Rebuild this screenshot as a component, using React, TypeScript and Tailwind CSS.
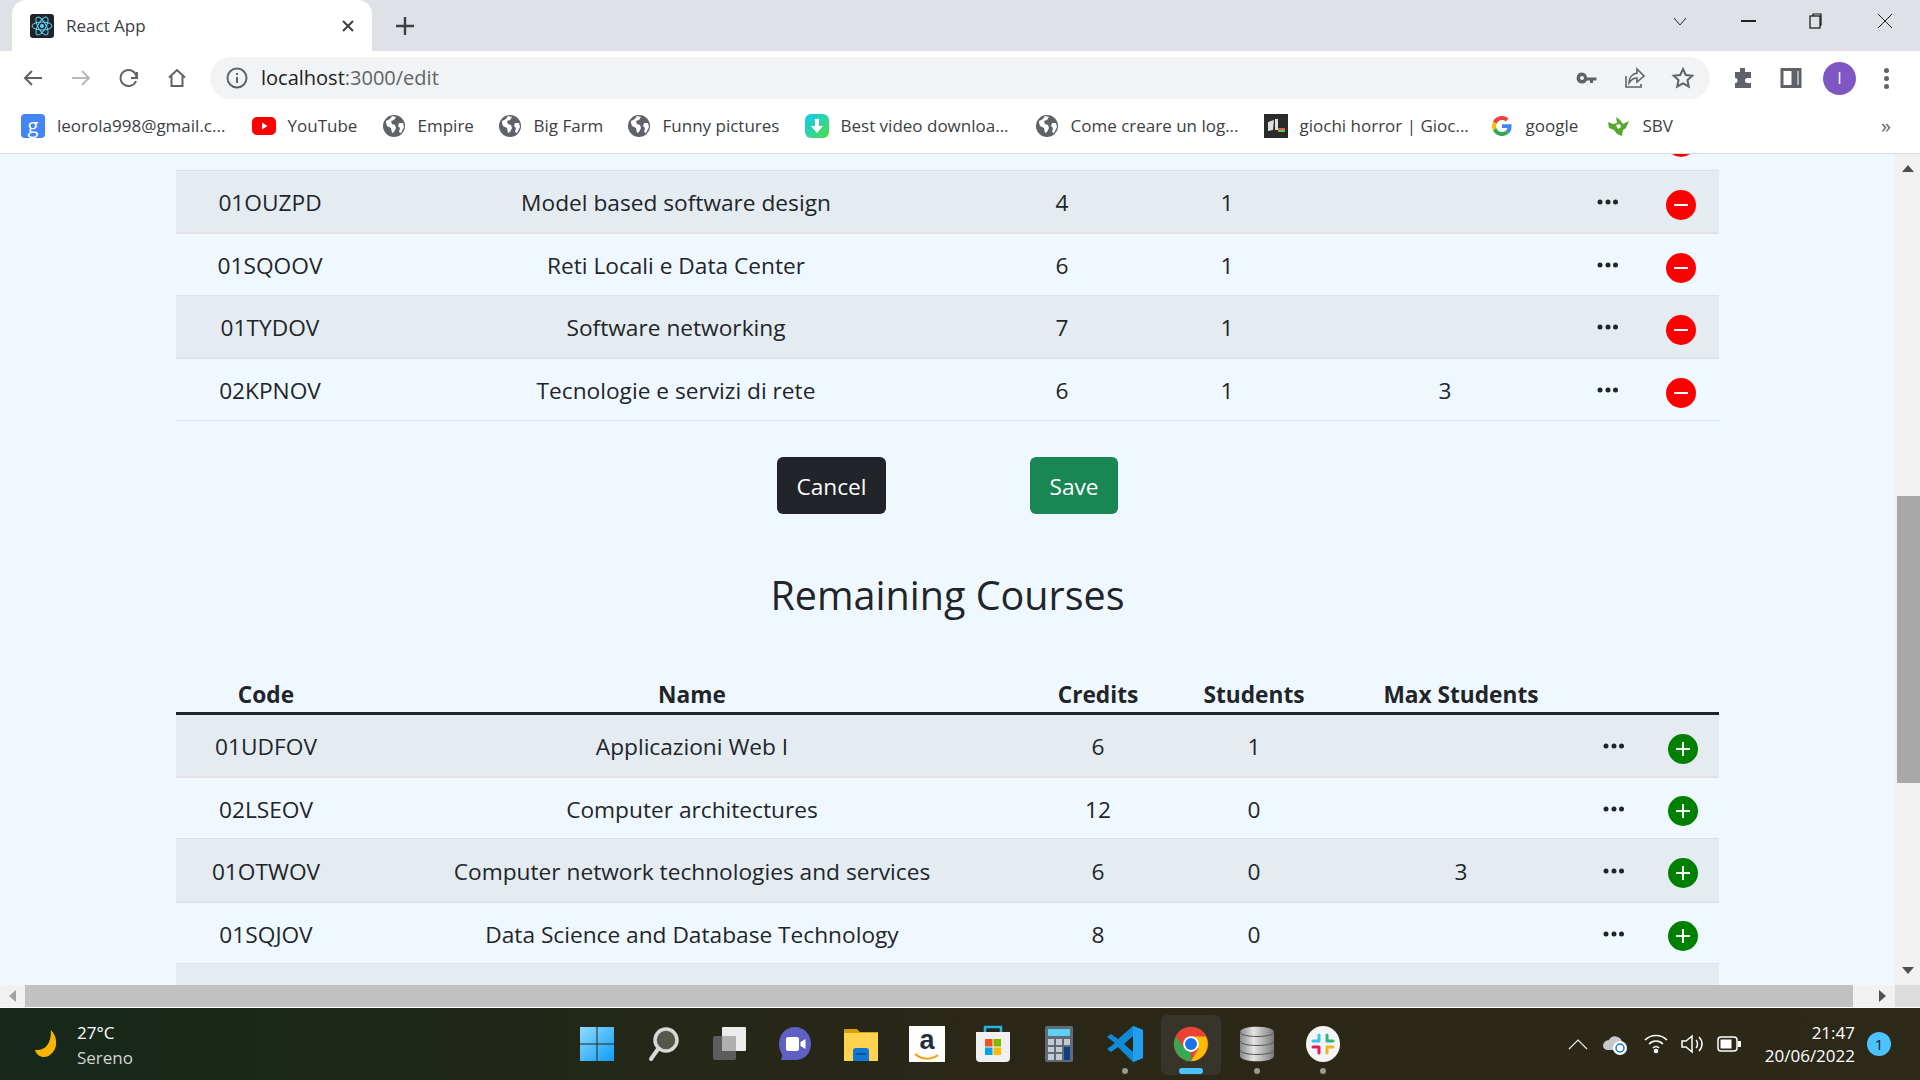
import React from 'react';

type Course = { code: string; name: string; credits: number; students: number; max?: number };

const FONT = "font-['Open_Sans','Noto_Sans',sans-serif]";

const selected: Course[] = [
  { code: '01OUZPD', name: 'Model based software design', credits: 4, students: 1 },
  { code: '01SQOOV', name: 'Reti Locali e Data Center', credits: 6, students: 1 },
  { code: '01TYDOV', name: 'Software networking', credits: 7, students: 1 },
  { code: '02KPNOV', name: 'Tecnologie e servizi di rete', credits: 6, students: 1, max: 3 },
];

const remaining: Course[] = [
  { code: '01UDFOV', name: 'Applicazioni Web I', credits: 6, students: 1 },
  { code: '02LSEOV', name: 'Computer architectures', credits: 12, students: 0 },
  { code: '01OTWOV', name: 'Computer network technologies and services', credits: 6, students: 0, max: 3 },
  { code: '01SQJOV', name: 'Data Science and Database Technology', credits: 8, students: 0 },
];

// --- browser icons ---
const Globe = () => (
  <svg width="24" height="24" viewBox="0 0 24 24">
    <circle cx="12" cy="12" r="11" fill="#5f6368" />
    <path d="M4 7c3-1 5-3 6-5l4 1-2 3-3 1 1 3 3 1 1 3-2 4-2 1-1-5-4-2-1-3zM17 9l4 0 1 4-3 6-2-1 1-4-2-2z" fill="#fff" />
  </svg>
);

const ReactLogo = () => (
  <svg width="24" height="24" viewBox="0 0 24 24">
    <rect width="24" height="24" rx="3" fill="#20232a" />
    <g fill="none" stroke="#61dafb" strokeWidth="1">
      <ellipse cx="12" cy="12" rx="10" ry="4" />
      <ellipse cx="12" cy="12" rx="10" ry="4" transform="rotate(60 12 12)" />
      <ellipse cx="12" cy="12" rx="10" ry="4" transform="rotate(120 12 12)" />
    </g>
    <circle cx="12" cy="12" r="2" fill="#61dafb" />
  </svg>
);

const GoogleG = () => (
  <svg width="20" height="20" viewBox="0 0 48 48">
    <path fill="#EA4335" d="M24 9.5c3.5 0 6.7 1.3 9.1 3.5l6.8-6.8C35.800 2.400 30.200 0 24 0 14.600 0 6.500 5.400 2.600 13.200l7.900 6.200C12.400 13.700 17.700 9.500 24 9.500z" />
    <path fill="#4285F4" d="M47 24.500c0-1.600-.1-3.100-.4-4.500H24v9h12.900c-.6 3-2.200 5.500-4.700 7.200l7.700 6c4.500-4.200 7.100-10.300 7.100-17.700z" />
    <path fill="#FBBC05" d="M10.500 28.600c-.5-1.400-.8-3-.8-4.600s.3-3.200.8-4.600l-7.900-6.200C.9 16.500 0 20.100 0 24s.9 7.500 2.600 10.800l7.900-6.200z" />
    <path fill="#34A853" d="M24 48c6.500 0 11.900-2.100 15.900-5.800l-7.700-6c-2.200 1.400-4.900 2.300-8.200 2.300-6.300 0-11.600-4.200-13.500-9.900l-7.900 6.200C6.500 42.600 14.600 48 24 48z" />
  </svg>
);

const bookmarks: { icon: React.ReactNode; label: string; w: string }[] = [
  {
    icon: <span className="flex h-6 w-6 items-center justify-center rounded-sm bg-[#4285f4] text-[20px] leading-none text-white">g</span>,
    label: 'leorola998@gmail.c...',
    w: 'w-[169.500px]',
  },
  {
    icon: (
      <svg width="24" height="24" viewBox="0 0 24 24">
        <rect y="3" width="24" height="18" rx="5" fill="#f00" />
        <path d="M10 8.500v7l5.500-3.500z" fill="#fff" />
      </svg>
    ),
    label: 'YouTube',
    w: 'w-[69px]',
  },
  { icon: <Globe />, label: 'Empire', w: 'w-[55px]' },
  { icon: <Globe />, label: 'Big Farm', w: 'w-[68px]' },
  { icon: <Globe />, label: 'Funny pictures', w: 'w-[117px]' },
  {
    icon: (
      <span className="flex h-6 w-6 items-center justify-center rounded-md bg-gradient-to-br from-[#12c8f0] to-[#4fdc20]">
        <svg width="14" height="16" viewBox="0 0 14 16">
          <path d="M5 1h4v7h4l-6 7-6-7h4z" fill="#fff" />
        </svg>
      </span>
    ),
    label: 'Best video downloa...',
    w: 'w-[169px]',
  },
  { icon: <Globe />, label: 'Come creare un log...', w: 'w-[168px]' },
  {
    icon: (
      <svg width="24" height="24" viewBox="0 0 24 24">
        <rect width="24" height="24" fill="#2b2b2b" />
        <path d="M4 8l6-2-1 10-5 1zM11 5h3v11h-3z" fill="#ddd" />
        <rect x="14" y="14" width="7" height="2" fill="#e55" />
        <rect x="14" y="16" width="7" height="2" fill="#5c5" />
      </svg>
    ),
    label: 'giochi horror | Gioc...',
    w: 'w-[165px]',
  },
  { icon: <GoogleG />, label: 'google', w: 'w-[56px]' },
  {
    icon: (
      <svg width="24" height="24" viewBox="0 0 24 24">
        <path d="M1 8l5 2 4-1-1-6 4 3 3 4 6-3-3 7-3 2-1 6-5-2-3-4-5-2z" fill="#58a82e" />
        <path d="M9 11l4-1 1 3-3 2z" fill="#fff" />
      </svg>
    ),
    label: 'SBV',
    w: 'w-[32px]',
  },
];

const IconStroke: React.FC<{ size?: number; color?: string; width?: number; d: string }> = ({ size = 24, color = '#5f6368', width = 2, d }) => (
  <svg width={size} height={size} viewBox="0 0 24 24" fill="none" stroke={color} strokeWidth={width}>
    <path d={d} />
  </svg>
);

const TabStrip = () => (
  <div className="flex h-[51px] items-end bg-[#dee1e6] pl-[12px]">
    <div className="flex h-[51px] w-[360px] items-center rounded-t-[14px] bg-white pl-[18px] pr-[17px]">
      <ReactLogo />
      <span className="ml-[12px] flex-1 text-[17px] text-[#3c4043]">React App</span>
      <svg width="14" height="14" viewBox="0 0 14 14" stroke="#3c4043" strokeWidth="2">
        <path d="M2 2l10 10M12 2L2 12" />
      </svg>
    </div>
    <div className="ml-[23px] flex h-[51px] w-[20px] items-center justify-center pt-[1px]">
      <svg width="20" height="20" viewBox="0 0 20 20" stroke="#3c4043" strokeWidth="2.400">
        <path d="M10 1v18M1 10h18" />
      </svg>
    </div>
    <div className="ml-auto flex h-[42px] items-center self-start">
      <div className="flex w-[69px] justify-center">
        <svg width="14" height="9" viewBox="0 0 14 9" fill="none" stroke="#222" strokeWidth="1"><path d="M1 1l6 7 6-7" /></svg>
      </div>
      <div className="flex w-[68px] justify-center">
        <div className="h-[1.5px] w-[15px] bg-[#222]" />
      </div>
      <div className="flex w-[69px] justify-center">
        <svg width="16" height="16" viewBox="0 0 16 16" fill="none" stroke="#111" strokeWidth="1.200">
          <rect x="1" y="3" width="10" height="12" />
          <path d="M4 3V1h8v11h-1" />
        </svg>
      </div>
      <div className="flex w-[69px] justify-center pr-[2px]">
        <svg width="16" height="16" viewBox="0 0 16 16" stroke="#222" strokeWidth="1"><path d="M1 1l14 14M15 1L1 15" /></svg>
      </div>
    </div>
  </div>
);

const Toolbar = () => (
  <div className="flex h-[49px] items-center bg-white pl-[21px] pt-[5px]">
    <IconStroke d="M21 12H4M11 5l-7 7 7 7" />
    <div className="ml-[24px]"><IconStroke color="#b6b8bb" d="M3 12h17M13 5l7 7-7 7" /></div>
    <div className="ml-[24px]"><IconStroke d="M20 6v6h-6M19.500 11A8 8 0 1 0 19 15" /></div>
    <div className="ml-[24px]"><IconStroke d="M4 11.500L12 4l8 7.500M6.500 10v10h11V10" /></div>
    <div className="ml-[21px] flex h-[42px] w-[1500px] items-center rounded-full bg-[#f1f3f4] pl-[15px] pr-[15px]">
      <svg width="24" height="24" viewBox="0 0 24 24" fill="none" stroke="#5f6368" strokeWidth="2">
        <circle cx="12" cy="12" r="9.500" />
        <path d="M12 11v6M12 7v2" />
      </svg>
      <span className="ml-[12px] flex-1 text-[20px] text-[#202124]">
        localhost<span className="text-[#5f6368]">:3000/edit</span>
      </span>
      <svg width="24" height="24" viewBox="0 0 24 24" fill="#5f6368">
        <path d="M7 6.500a5.500 5.500 0 1 0 5 8h3v2.500h3v-2.500h3.500v-3H12a5.500 5.500 0 0 0-5-5zM7 10a2 2 0 1 1 0 4 2 2 0 0 1 0-4z" />
      </svg>
      <div className="ml-[24px]">
        <svg width="24" height="24" viewBox="0 0 24 24" fill="none" stroke="#5f6368" strokeWidth="1.600">
          <path d="M3 10v11h15v-3M14 3l7 7-7 6v-4c-4 0-6 2-8 5 0-5 3-9 8-10z" />
        </svg>
      </div>
      <div className="ml-[24px]">
        <IconStroke d="M12 3l2.800 6 6.500.700-4.800 4.400 1.300 6.400L12 17.300 6.200 20.500l1.300-6.400-4.800-4.400 6.500-.700z" />
      </div>
    </div>
    <div className="ml-[21px]">
      <svg width="24" height="24" viewBox="0 0 24 24" fill="#5f6368">
        <path d="M9 2h5v4h6v6h-3.500a2.500 2.500 0 0 0 0 5H20v5H4v-5a2.500 2.500 0 0 0 0-5V6h5z" />
      </svg>
    </div>
    <div className="ml-[24px]">
      <svg width="24" height="24" viewBox="0 0 24 24" fill="none" stroke="#5f6368" strokeWidth="3">
        <rect x="3" y="3.500" width="18" height="17" />
        <path d="M15.500 3v18" strokeWidth="6" />
      </svg>
    </div>
    <div className="ml-[20px] flex h-[33px] w-[33px] items-center justify-center rounded-full bg-[#7e57c2] text-[16px] leading-none text-white">I</div>
    <div className="ml-[28px] flex w-[4px] flex-col gap-[3px]">
      <div className="h-[5px] w-[5px] rounded-full bg-[#5f6368]" />
      <div className="h-[5px] w-[5px] rounded-full bg-[#5f6368]" />
      <div className="h-[5px] w-[5px] rounded-full bg-[#5f6368]" />
    </div>
  </div>
);

const BookmarksBar = () => (
  <div className="flex h-[54px] items-center border-b-[1px] border-[#dadce0] bg-white pb-[2px] pl-[21px]">
    {bookmarks.map((b) => (
      <div key={b.label} className="mr-[25px] flex items-center gap-[12px]">
        <div className="flex w-[24px] justify-center">{b.icon}</div>
        <span className={`${b.w} whitespace-nowrap text-[17px] leading-none text-[#3c4043]`}>{b.label}</span>
      </div>
    ))}
    <span className="ml-auto mr-[29px] text-[20px] leading-none text-[#5f6368]">»</span>
  </div>
);

// --- table ---
const Dots = () => (
  <svg width="22" height="6" viewBox="0 0 22 6" fill="#212529" className="mx-auto mt-[2px]">
    <circle cx="3" cy="3" r="2.500" />
    <circle cx="11" cy="3" r="2.500" />
    <circle cx="18.500" cy="3" r="2.500" />
  </svg>
);

const RoundAction: React.FC<{ kind: 'add' | 'remove' }> = ({ kind }) => (
  <svg width="30" height="30" viewBox="0 0 30 30" className="mx-auto mt-[7px]">
    <circle cx="15" cy="15" r="15" fill={kind === 'add' ? '#008000' : '#ff0000'} />
    <path d={kind === 'add' ? 'M8 15h14M15 8v14' : 'M8 15h14'} stroke="#fff" strokeWidth="2" />
  </svg>
);

const CourseRow: React.FC<{ c: Course; striped: boolean; kind: 'add' | 'remove' }> = ({ c, striped, kind }) => (
  <tr className={`border-[#dee2e6] text-center ${striped ? 'h-[63px] border-b-2 bg-[#e4ecf2]' : 'h-[62px] border-b'}`}>
    <td className="pt-[4px]">{c.code}</td>
    <td className="pt-[4px]">{c.name}</td>
    <td className="pt-[4px]">{c.credits}</td>
    <td className="pt-[4px]">{c.students}</td>
    <td className="pt-[4px]">{c.max ?? ''}</td>
    <td><Dots /></td>
    <td className={kind === 'remove' ? 'pr-[1px]' : ''}><RoundAction kind={kind} /></td>
  </tr>
);

const Scrollbar = () => (
  <div className="flex w-[25px] flex-col items-center bg-[#f1f1f1]">
    <div className="flex h-[29px] items-center">
      <svg width="12" height="7" viewBox="0 0 12 7" fill="#505050"><path d="M6 0l6 7H0z" /></svg>
    </div>
    <div className="mt-[313px] h-[287px] w-[23px] self-end bg-[#a8a8a8]" />
    <div className="mt-auto flex h-[29px] items-center">
      <svg width="12" height="7" viewBox="0 0 12 7" fill="#505050"><path d="M6 7l6-7H0z" /></svg>
    </div>
  </div>
);

const Page = () => (
  <div className="flex h-[831px] bg-[#f0f8ff]">
    <div className={`flex-1 overflow-hidden text-[22.700px] text-[#212529] ${FONT}`}>
      <div className="-mt-[46px] px-[176px]">
        <table className="w-[1543px] table-fixed border-collapse">
          <colgroup>
            <col className="w-[188px]" />
            <col className="w-[624px]" />
            <col className="w-[148px]" />
            <col className="w-[182px]" />
            <col className="w-[254px]" />
            <col className="w-[72px]" />
            <col className="w-[75px]" />
          </colgroup>
          <tbody>
            <tr className="h-[62px] border-b border-[#dee2e6]">
              <td colSpan={6} />
              <td className="pr-[1px]"><RoundAction kind="remove" /></td>
            </tr>
            {selected.map((c, i) => (
              <CourseRow key={c.code} c={c} striped={i % 2 === 0} kind="remove" />
            ))}
          </tbody>
        </table>

        <div className="mt-[36px] flex">
          <button className="ml-[601px] h-[57px] w-[109px] rounded-[6px] bg-[#212529] pt-[5px] text-white">Cancel</button>
          <button className="ml-[144px] h-[57px] w-[88px] rounded-[6px] bg-[#198754] pt-[5px] text-white">Save</button>
        </div>

        <h2 className="mt-[52px] w-[1543px] text-center text-[39.500px] leading-[58px] font-normal">Remaining Courses</h2>

        <table className="mt-[40px] w-[1543px] table-fixed border-collapse">
          <colgroup>
            <col className="w-[180px]" />
            <col className="w-[672px]" />
            <col className="w-[140px]" />
            <col className="w-[172px]" />
            <col className="w-[242px]" />
            <col className="w-[64px]" />
            <col className="w-[73px]" />
          </colgroup>
          <thead>
            <tr className="h-[50px] border-b-[3px] border-[#212529] text-center">
              <th className="pt-[14px]">Code</th>
              <th className="pt-[14px]">Name</th>
              <th className="pt-[14px]">Credits</th>
              <th className="pt-[14px]">Students</th>
              <th className="pt-[14px]">Max Students</th>
              <th />
              <th />
            </tr>
          </thead>
          <tbody>
            {remaining.map((c, i) => (
              <CourseRow key={c.code} c={c} striped={i % 2 === 0} kind="add" />
            ))}
            <tr className="h-[63px] bg-[#e4ecf2]">
              <td colSpan={7} />
            </tr>
          </tbody>
        </table>
      </div>
    </div>
    <Scrollbar />
  </div>
);

const HScrollbar = () => (
  <div className="flex h-[23px] border-b-[1px] border-white bg-[#f1f1f1]">
    <div className="flex w-[25px] items-center justify-center">
      <svg width="7" height="12" viewBox="0 0 7 12" fill="#a0a0a0"><path d="M0 6l7-6v12z" /></svg>
    </div>
    <div className="h-full w-[1828px] bg-[#c1c1c1]" />
    <div className="flex w-[42px] items-center justify-end pr-[9px]">
      <svg width="7" height="12" viewBox="0 0 7 12" fill="#505050"><path d="M7 6L0 0v12z" /></svg>
    </div>
    <div className="w-[25px] bg-[#dcdcdc]" />
  </div>
);

// --- taskbar ---
const taskIcons: { key: string; node: React.ReactNode; mark?: 'dot' | 'bar' }[] = [
  {
    key: 'start',
    node: (
      <svg width="36" height="36" viewBox="0 0 36 36">
        <defs>
          <linearGradient id="win" x1="0" y1="0" x2="1" y2="1">
            <stop offset="0" stopColor="#8fdcff" />
            <stop offset="1" stopColor="#0f9bf5" />
          </linearGradient>
        </defs>
        <path d="M1 1h16.500v16.500H1zM18.500 1H35v16.500H18.500zM1 18.500h16.500V35H1zM18.500 18.500H35V35H18.500z" fill="url(#win)" />
      </svg>
    ),
  },
  {
    key: 'search',
    node: (
      <svg width="36" height="36" viewBox="0 0 36 36" fill="none" stroke="#d8d8d8">
        <circle cx="21" cy="14" r="11" strokeWidth="3.500" fill="#56564a" />
        <path d="M13 23l-7 10" strokeWidth="4" strokeLinecap="round" />
      </svg>
    ),
  },
  {
    key: 'desktops',
    node: (
      <svg width="36" height="36" viewBox="0 0 36 36">
        <rect x="2" y="10" width="23" height="24" rx="2" fill="#5d5d5d" />
        <rect x="11" y="1" width="24" height="24" rx="1" fill="#ececec" />
        <rect x="11" y="10" width="14" height="15" fill="#b0b0b0" />
      </svg>
    ),
  },
  {
    key: 'teams',
    node: (
      <svg width="36" height="36" viewBox="0 0 36 36">
        <path d="M18 1c10 0 16 8 16 17s-6 16-16 16H4c1-3 1-5 1-6-2-3-3-6-3-10C2 9 8 1 18 1z" fill="#5f5fc4" />
        <rect x="9" y="11" width="13" height="14" rx="2" fill="#fff" />
        <path d="M23.500 16l5-3v10l-5-3z" fill="#fff" />
      </svg>
    ),
  },
  {
    key: 'files',
    node: (
      <svg width="36" height="36" viewBox="0 0 36 36">
        <path d="M1 3h13l3 3h18v28H1z" fill="#d69f0c" />
        <rect x="1" y="7" width="34" height="28" fill="#ffd24f" />
        <path d="M10 35V25a3 3 0 0 1 3-3h10a3 3 0 0 1 3 3v10z" fill="#0f78d4" />
        <rect x="13" y="27" width="10" height="2" fill="#0a4f96" />
      </svg>
    ),
  },
  {
    key: 'amazon',
    node: (
      <div className="flex h-[36px] w-[36px] flex-col items-center bg-white pt-[1px]">
        <span className="font-['Liberation_Sans',sans-serif] text-[27px] leading-[26px] font-bold text-[#232f3e]">a</span>
        <svg width="26" height="8" viewBox="0 0 26 8" fill="none" stroke="#f90" strokeWidth="2"><path d="M1 1c7 6 16 6 23 1" /></svg>
      </div>
    ),
  },
  {
    key: 'store',
    node: (
      <svg width="36" height="38" viewBox="0 0 36 38">
        <path d="M10 7V2h16v5" fill="none" stroke="#2ab3e6" strokeWidth="2.500" />
        <path d="M1 7h34v26a4 4 0 0 1-4 4H5a4 4 0 0 1-4-4z" fill="#f0f0f0" />
        <rect x="10" y="14" width="7.500" height="7.500" fill="#f25022" />
        <rect x="18.500" y="14" width="7.500" height="7.500" fill="#7fba00" />
        <rect x="10" y="22.500" width="7.500" height="7.500" fill="#00a4ef" />
        <rect x="18.500" y="22.500" width="7.500" height="7.500" fill="#ffb900" />
      </svg>
    ),
  },
  {
    key: 'calc',
    node: (
      <svg width="28" height="36" viewBox="0 0 28 36">
        <rect width="28" height="36" rx="2" fill="#5f6b78" />
        <rect x="3" y="3" width="22" height="7" fill="#5cd0f0" />
        <g fill="#c4cad0">
          <rect x="3" y="13" width="6" height="6" /><rect x="11" y="13" width="6" height="6" /><rect x="19" y="13" width="6" height="6" />
          <rect x="3" y="21" width="6" height="5" /><rect x="11" y="21" width="6" height="5" />
          <rect x="3" y="28" width="6" height="6" /><rect x="11" y="28" width="6" height="6" />
        </g>
        <rect x="19" y="21" width="6" height="13" fill="#0f3f80" />
      </svg>
    ),
  },
  {
    key: 'vscode',
    node: (
      <svg width="36" height="38" viewBox="0 0 36 38">
        <path d="M26 1l10 4v28l-10 4-15-15-7 5-4-3 8-6-8-6 4-3 7 5zM26 11l-9 8 9 8z" fill="#0f8ad6" />
        <path d="M26 1l10 4v28l-10 4z" fill="#1f9fee" />
      </svg>
    ),
    mark: 'dot',
  },
  {
    key: 'chrome',
    node: (
      <svg width="36" height="36" viewBox="0 0 48 48">
        <circle cx="24" cy="24" r="23" fill="#ea4335" />
        <path d="M24 47A23 23 0 0 1 4 13.500L15 30h9z" fill="#34a853" />
        <path d="M24 14h20a23 23 0 0 1-20 33l10-17z" fill="#fbbc05" />
        <circle cx="24" cy="24" r="10.500" fill="#fff" />
        <circle cx="24" cy="24" r="8" fill="#1a73e8" />
      </svg>
    ),
    mark: 'bar',
  },
  {
    key: 'db',
    node: (
      <svg width="36" height="36" viewBox="0 0 36 36">
        <defs>
          <linearGradient id="db" x1="0" y1="0" x2="1" y2="0">
            <stop offset="0" stopColor="#8a8a8a" />
            <stop offset="0.4" stopColor="#e4e4e4" />
            <stop offset="1" stopColor="#7a7a7a" />
          </linearGradient>
        </defs>
        <path d="M1 6c0-7 34-7 34 0v24c0 7-34 7-34 0z" fill="url(#db)" />
        <path d="M1 6c0 6 34 6 34 0M1 15c0 6 34 6 34 0M1 24c0 6 34 6 34 0" fill="none" stroke="#555" strokeWidth="1" />
      </svg>
    ),
    mark: 'dot',
  },
  {
    key: 'slack',
    node: (
      <svg width="36" height="36" viewBox="0 0 36 36">
        <ellipse cx="18" cy="18" rx="17" ry="18" fill="#f5f5f5" />
        <g strokeWidth="3" strokeLinecap="round">
          <path d="M14 9v6M8 15h6" stroke="#36c5f0" />
          <path d="M22 9v6M28 15h-6" stroke="#2eb67d" />
          <path d="M22 27v-6M28 21h-6" stroke="#ecb22e" />
          <path d="M14 27v-6M8 21h6" stroke="#e01e5a" />
        </g>
      </svg>
    ),
    mark: 'dot',
  },
];

const Taskbar = () => (
  <div className={`grid h-[72px] grid-cols-[1fr_auto_1fr] bg-gradient-to-r from-[#15281a] via-[#2a2717] via-50% to-[#2d2918] ${FONT}`}>
    <div className="flex items-center pl-[34px]">
      <svg width="30" height="30" viewBox="0 0 32 32">
        <path d="M18 1c8 8 8 22-3 28C9 31 3 29 1 22c8 2 18-4 17-21z" fill="#f9b400" />
      </svg>
      <div className="ml-[13px] flex flex-col gap-[3px] pt-[2px] text-[17px] leading-[22px]">
        <span className="text-white">27°C</span>
        <span className="text-[#d4d4d4]">Sereno</span>
      </div>
    </div>
    <div className="flex">
      {taskIcons.map((t) => (
        <div key={t.key} className="relative flex w-[66px] items-center justify-center">
          {t.mark === 'bar' && <div className="absolute top-[7px] h-[60px] w-[60px] rounded-md bg-[#37352a]" />}
          <div className="relative">{t.node}</div>
          {t.mark === 'dot' && <div className="absolute bottom-[6px] h-[6px] w-[6px] rounded-full bg-[#9a9a92]" />}
          {t.mark === 'bar' && <div className="absolute bottom-[6px] h-[6px] w-[24px] rounded-full bg-[#4cc2ff]" />}
        </div>
      ))}
    </div>
    <div className="flex items-center justify-end pr-[29px] text-white">
      <svg width="20" height="11" viewBox="0 0 20 11" fill="none" stroke="#eee" strokeWidth="1.200"><path d="M1 10l9-9 9 9" /></svg>
      <svg width="26" height="24" viewBox="0 0 26 24" className="ml-[13px]">
        <path d="M2 14a6 6 0 0 1 6-6 7 7 0 0 1 13 2v8H7a5 5 0 0 1-5-4z" fill="#c8c8c8" />
        <circle cx="19" cy="16" r="7" fill="#fff" />
        <circle cx="19" cy="16" r="4" fill="none" stroke="#0f78d4" strokeWidth="1.500" />
      </svg>
      <svg width="24" height="22" viewBox="0 0 24 22" fill="none" stroke="#fff" strokeWidth="1.600" className="ml-[17px]">
        <path d="M1 7c6-6 16-6 22 0M5 11c4-4 10-4 14 0M9 15c2-2 4-2 6 0" />
        <circle cx="12" cy="18" r="1.500" fill="#fff" />
      </svg>
      <svg width="24" height="22" viewBox="0 0 24 22" fill="none" stroke="#fff" strokeWidth="1.500" className="ml-[13px]">
        <path d="M1 8h4l6-5v16l-6-5H1zM15 7c2 2 2 6 0 8M18 4c4 4 4 10 0 14" />
      </svg>
      <svg width="24" height="16" viewBox="0 0 24 16" className="ml-[12px]">
        <rect x="1" y="1" width="19" height="14" rx="3" fill="none" stroke="#fff" strokeWidth="1.500" />
        <rect x="3.500" y="3.500" width="11" height="9" fill="#fff" />
        <rect x="21" y="5" width="3" height="6" fill="#fff" />
      </svg>
      <div className="ml-[24px] flex flex-col items-end text-[17px] leading-[23px]">
        <span>21:47</span>
        <span>20/06/2022</span>
      </div>
      <div className="ml-[12px] flex h-[24px] w-[24px] items-center justify-center rounded-full bg-[#4cc2ff] text-[15px] text-[#1a1a1a]">1</div>
    </div>
  </div>
);

const App: React.FC = () => {
  return (
    <div className="flex h-[1080px] w-[1920px] flex-col overflow-hidden">
      <div className={FONT}>
        <TabStrip />
        <Toolbar />
        <BookmarksBar />
      </div>
      <Page />
      <HScrollbar />
      <Taskbar />
    </div>
  );
};

export default App;
